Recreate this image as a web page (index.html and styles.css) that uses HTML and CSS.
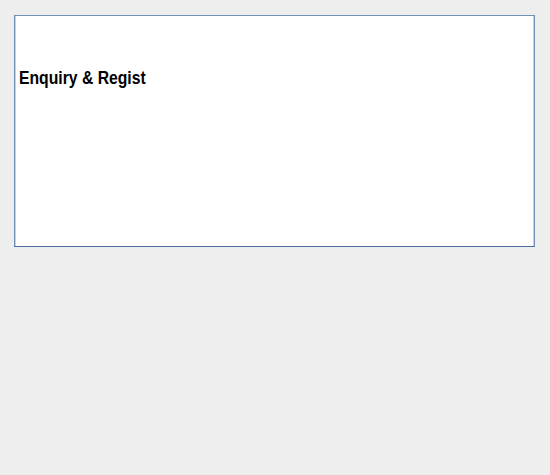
FILE: index.html
```html
<!DOCTYPE html>
<html>
<head>
<meta charset="utf-8">
<link rel="stylesheet" href="styles.css">
</head>
<body>
<div class="panel">
  <h1 class="title">Enquiry &amp; Regist</h1>
</div>
</body>
</html>
```
FILE: styles.css
```css
html, body {
  margin: 0;
  padding: 0;
  background: #eeeeee;
}
body {
  padding: 15px 0 0 14px;
}
.panel {
  box-sizing: border-box;
  width: 521px;
  height: 232px;
  background: #ffffff;
  border: 1px solid #7090b8;
  border-bottom-color: #4a6c9c;
  box-shadow: inset 1px 0 0 #c4d2e2, inset -1px 0 0 #c4d2e2;
  padding: 50px 4px 0 4px;
}
.title {
  margin: 0;
  font-family: "Liberation Sans", Arial, sans-serif;
  font-weight: bold;
  font-size: 18.5px;
  line-height: 24px;
  color: #000;
  transform: scaleX(0.85);
  transform-origin: left center;
  white-space: nowrap;
}
```
